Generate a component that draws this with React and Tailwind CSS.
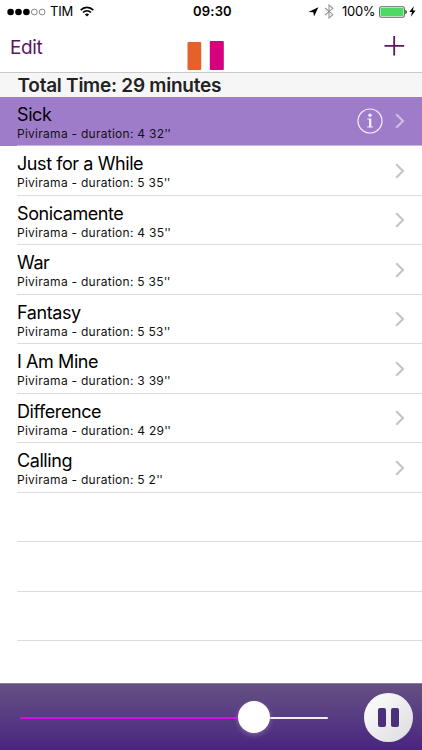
import React from 'react';
import clsx from 'clsx';

const tracks = [
    { title: 'Sick', duration: '4 32', active: true },
    { title: 'Just for a While', duration: '5 35' },
    { title: 'Sonicamente', duration: '4 35' },
    { title: 'War', duration: '5 35' },
    { title: 'Fantasy', duration: '5 53' },
    { title: 'I Am Mine', duration: '3 39' },
    { title: 'Difference', duration: '4 29' },
    { title: 'Calling', duration: '5 2' },
];

function StatusBar() {
    return (
        <div className="flex h-[23px] w-full items-center text-[13px] leading-none text-black">
            <div className="flex w-[193px] items-center pl-[7px]">
                <svg width="39" height="8" viewBox="0 0 39 8">
                    <circle cx="3.6" cy="4" r="3.3" />
                    <circle cx="11.5" cy="4" r="3.3" />
                    <circle cx="19.4" cy="4" r="3.3" />
                    <circle cx="27.3" cy="4" r="2.9" fill="none" stroke="#555" strokeWidth="0.7" />
                    <circle cx="35.1" cy="4" r="2.9" fill="none" stroke="#555" strokeWidth="0.7" />
                </svg>
                <span className="ml-[4px] w-[24px] tracking-[-0.2px]">TIM</span>
                <svg className="ml-[6px]" width="14" height="11" viewBox="0 0 14 11" fill="none" stroke="#000" strokeWidth="1.7">
                    <path d="M0.7 4.2C4.2 0.5 9.8 0.5 13.3 4.2" />
                    <path d="M3 6.5C5.3 4.2 8.7 4.2 11 6.5" />
                    <path d="M4.9 8.4L7 10.6L9.1 8.4C7.9 7.3 6.1 7.3 4.9 8.4Z" fill="#000" stroke="none" />
                </svg>
            </div>
            <span className="w-[115px] text-[13px] font-semibold tracking-[0.2px]">09:30</span>
            <svg width="11" height="10" viewBox="0 0 11 10">
                <path d="M10.4 0.2L6 9.6L5.3 5.3L0.4 4.9Z" />
            </svg>
            <svg className="ml-[5px]" width="10" height="15" viewBox="0 0 10 15" fill="none" stroke="#999" strokeWidth="1.1">
                <path d="M1 4L8.8 10.7L5 14V1L8.8 4.3L1 11" />
            </svg>
            <span className="ml-[8px] w-[35px] whitespace-nowrap text-[13px] tracking-[-0.3px]">100%</span>
            <svg className="ml-[2px]" width="29" height="12" viewBox="0 0 29 12">
                <rect x="0.5" y="0.7" width="25" height="10.6" rx="1.6" fill="#fff" stroke="#444" strokeWidth="0.8" />
                <rect x="1.5" y="1.7" width="23" height="8.6" rx="0.6" fill="#4cd964" />
                <path d="M26.4 4C28.2 4.4 28.2 7.6 26.4 8Z" fill="#222" />
            </svg>
            <svg className="ml-px" width="7" height="11" viewBox="0 0 7 11">
                <path d="M4.8 0.3L0.3 6.1H3L1.9 10.7L6.6 4.6H3.9Z" />
            </svg>
        </div>
    );
}

function NavBar() {
    return (
        <div className="flex h-[49px] w-full pl-[10px] text-[#5c1560]">
            <span className="mt-[13px] w-[177px] text-[19px] leading-[24px] tracking-[-0.4px]">Edit</span>
            <svg className="mt-[17px]" width="38" height="31" viewBox="0 0 38 31">
                <rect x="0.5" y="2" width="13.7" height="28" rx="1" fill="#e6602a" />
                <rect x="22.8" y="1" width="14" height="29" rx="1" fill="#d6007f" />
            </svg>
            <svg className="mt-[12px] ml-[159px]" width="21" height="21" viewBox="0 0 21 21" stroke="#5c1560" strokeWidth="1.8">
                <path d="M0.5 10.8H20.2M10.2 1V20.5" />
            </svg>
        </div>
    );
}

function InfoIcon() {
    return (
        <svg width="26" height="26" viewBox="0 0 26 26" fill="none" stroke="#f6eefc" strokeWidth="1.2">
            <circle cx="13" cy="13" r="12" />
            <circle cx="13" cy="7.2" r="1.7" fill="#f6eefc" stroke="none" />
            <path d="M10.3 10.5H14.3V18.4H16V19.5H10.2V18.4H12V11.6H10.3Z" fill="#f6eefc" stroke="none" />
        </svg>
    );
}

function TrackRow({ title, duration, active }) {
    return (
        <div className={clsx('h-[49.5px] w-full pl-[17px]', active && 'bg-[#9f7cca]')}>
            <div className={clsx('flex h-full items-center border-b pr-[17px]', active ? 'border-[#c9b7e0]' : 'border-[#dcdbde]')}>
                <div className="h-full flex-1 pt-[7px]">
                    <div className="text-[18px] leading-[22px] tracking-[-0.42px] text-black">{title}</div>
                    <div className="text-[12px] leading-[15px] tracking-[0.27px] text-[#111]">
                        Pivirama - duration: {duration}
                        <span className="tracking-[-0.6px]">''</span>
                    </div>
                </div>
                {active && <InfoIcon />}
                <svg className="mt-px ml-[12px]" width="10" height="16" viewBox="0 0 10 16" fill="none" stroke={active ? '#cfc0e2' : '#c4c4c8'} strokeWidth="2.1">
                    <path d="M1.2 1.3L8 8L1.2 14.7" />
                </svg>
            </div>
        </div>
    );
}

function Player() {
    return (
        <div className="flex h-[67px] w-full items-center border-t border-[#8d7ba5] bg-linear-to-b from-[#655082] to-[#4a2381] pl-[20px]">
            <div className="flex w-[308px] items-center">
                <div className="mt-[2px] h-[2.5px] w-[218px] rounded-full bg-[#d012dc]" />
                <div className="size-8 rounded-full bg-white shadow-[0_2px_5px_rgba(255,255,255,0.25)]" />
                <div className="mt-[2px] h-[2.5px] flex-1 rounded-full bg-[#f1edf5]" />
            </div>
            <div className="ml-[36px] flex size-[49px] items-center justify-center gap-[5px] rounded-full bg-linear-to-br from-white to-[#dcdce0]">
                <div className="h-[19px] w-[8px] rounded-[2px] bg-[#4b2f7a]" />
                <div className="h-[19px] w-[8px] rounded-[2px] bg-[#4b2f7a]" />
            </div>
        </div>
    );
}

export default function App() {
    return (
        <div className="flex h-[750px] w-[422px] flex-col overflow-hidden bg-white font-['Inter','Liberation_Sans',sans-serif]">
            <StatusBar />
            <NavBar />
            <div className="h-[24.5px] w-full border-t border-[#c9c9cb] bg-[#f6f6f7] pl-[17.5px] text-[19px] leading-[25px] font-semibold tracking-[-0.25px] text-[#222]">
                Total Time: 29 minutes
            </div>
            <div className="flex-1">
                {tracks.map((track) => (
                    <TrackRow key={track.title} {...track} />
                ))}
                {[0, 1, 2].map((i) => (
                    <div key={i} className="h-[49.5px] pl-[17px]">
                        <div className="h-full border-b border-[#dcdbde]" />
                    </div>
                ))}
            </div>
            <Player />
        </div>
    );
}
